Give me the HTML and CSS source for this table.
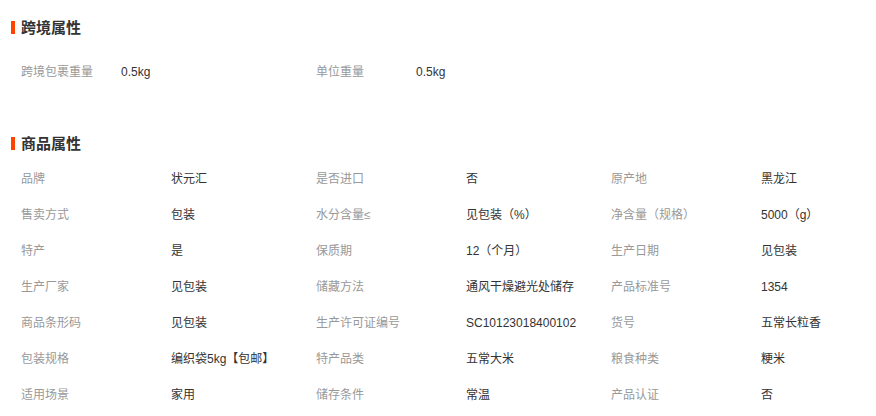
FILE: index.html
```html
<html>
	<head>
	<meta charset="utf-8"/>
		<link rel="stylesheet" href="styles.css">
	</head>
	<body>
		<div class="attrs">
			<div class="block cross">
				<h3 class="title">跨境属性</h3>
				<ul class="list">
					<li><span class="k">跨境包裹重量</span><span class="v">0.5kg</span></li>
					<li><span class="k">单位重量</span><span class="v">0.5kg</span></li>
				</ul>
			</div>
			<div class="block goods">
				<h3 class="title">商品属性</h3>
				<ul class="list">
					<li><span class="k">品牌</span><span class="v">状元汇</span></li>
					<li><span class="k">是否进口</span><span class="v">否</span></li>
					<li><span class="k">原产地</span><span class="v">黑龙江</span></li>
					<li><span class="k">售卖方式</span><span class="v">包装</span></li>
					<li><span class="k">水分含量≤</span><span class="v">见包装（%）</span></li>
					<li><span class="k">净含量（规格）</span><span class="v">5000（g）</span></li>
					<li><span class="k">特产</span><span class="v">是</span></li>
					<li><span class="k">保质期</span><span class="v">12（个月）</span></li>
					<li><span class="k">生产日期</span><span class="v">见包装</span></li>
					<li><span class="k">生产厂家</span><span class="v">见包装</span></li>
					<li><span class="k">储藏方法</span><span class="v">通风干燥避光处储存</span></li>
					<li><span class="k">产品标准号</span><span class="v">1354</span></li>
					<li><span class="k">商品条形码</span><span class="v">见包装</span></li>
					<li><span class="k">生产许可证编号</span><span class="v">SC10123018400102</span></li>
					<li><span class="k">货号</span><span class="v">五常长粒香</span></li>
					<li><span class="k">包装规格</span><span class="v">编织袋5kg【包邮】</span></li>
					<li><span class="k">特产品类</span><span class="v">五常大米</span></li>
					<li><span class="k">粮食种类</span><span class="v">粳米</span></li>
					<li><span class="k">适用场景</span><span class="v">家用</span></li>
					<li><span class="k">储存条件</span><span class="v">常温</span></li>
					<li><span class="k">产品认证</span><span class="v">否</span></li>
				</ul>
			</div>
		</div>
	</body>
</html>
```

FILE: styles.css
```css
body{
	margin: 0;
	background: #fff;
	font-family: "Liberation Sans", "Noto Sans CJK SC", sans-serif;
	font-size: 12px;
	color: #333;
}
.attrs{
	padding-left: 11px;
}
.block{
	padding-top: 21px;
}
.goods{
	padding-top: 47px;
}
.title{
	margin: 0;
	height: 13px;
	line-height: 13px;
	border-left: 4px solid #ff4400;
	padding-left: 6px;
	font-size: 15px;
	font-weight: bold;
	color: #333;
}
.list{
	list-style: none;
	margin: 0;
	padding: 0 0 0 10px;
	display: grid;
	grid-template-columns: repeat(3, 295px);
}
.cross .list{
	margin-top: 20px;
}
.goods .list{
	margin-top: 11px;
}
.list li{
	display: flex;
	height: 36px;
	line-height: 36px;
	white-space: nowrap;
}
.k{
	color: #999;
	width: 150px;
}
.cross .k{
	width: 100px;
}
.v{
	color: #333;
}
```
